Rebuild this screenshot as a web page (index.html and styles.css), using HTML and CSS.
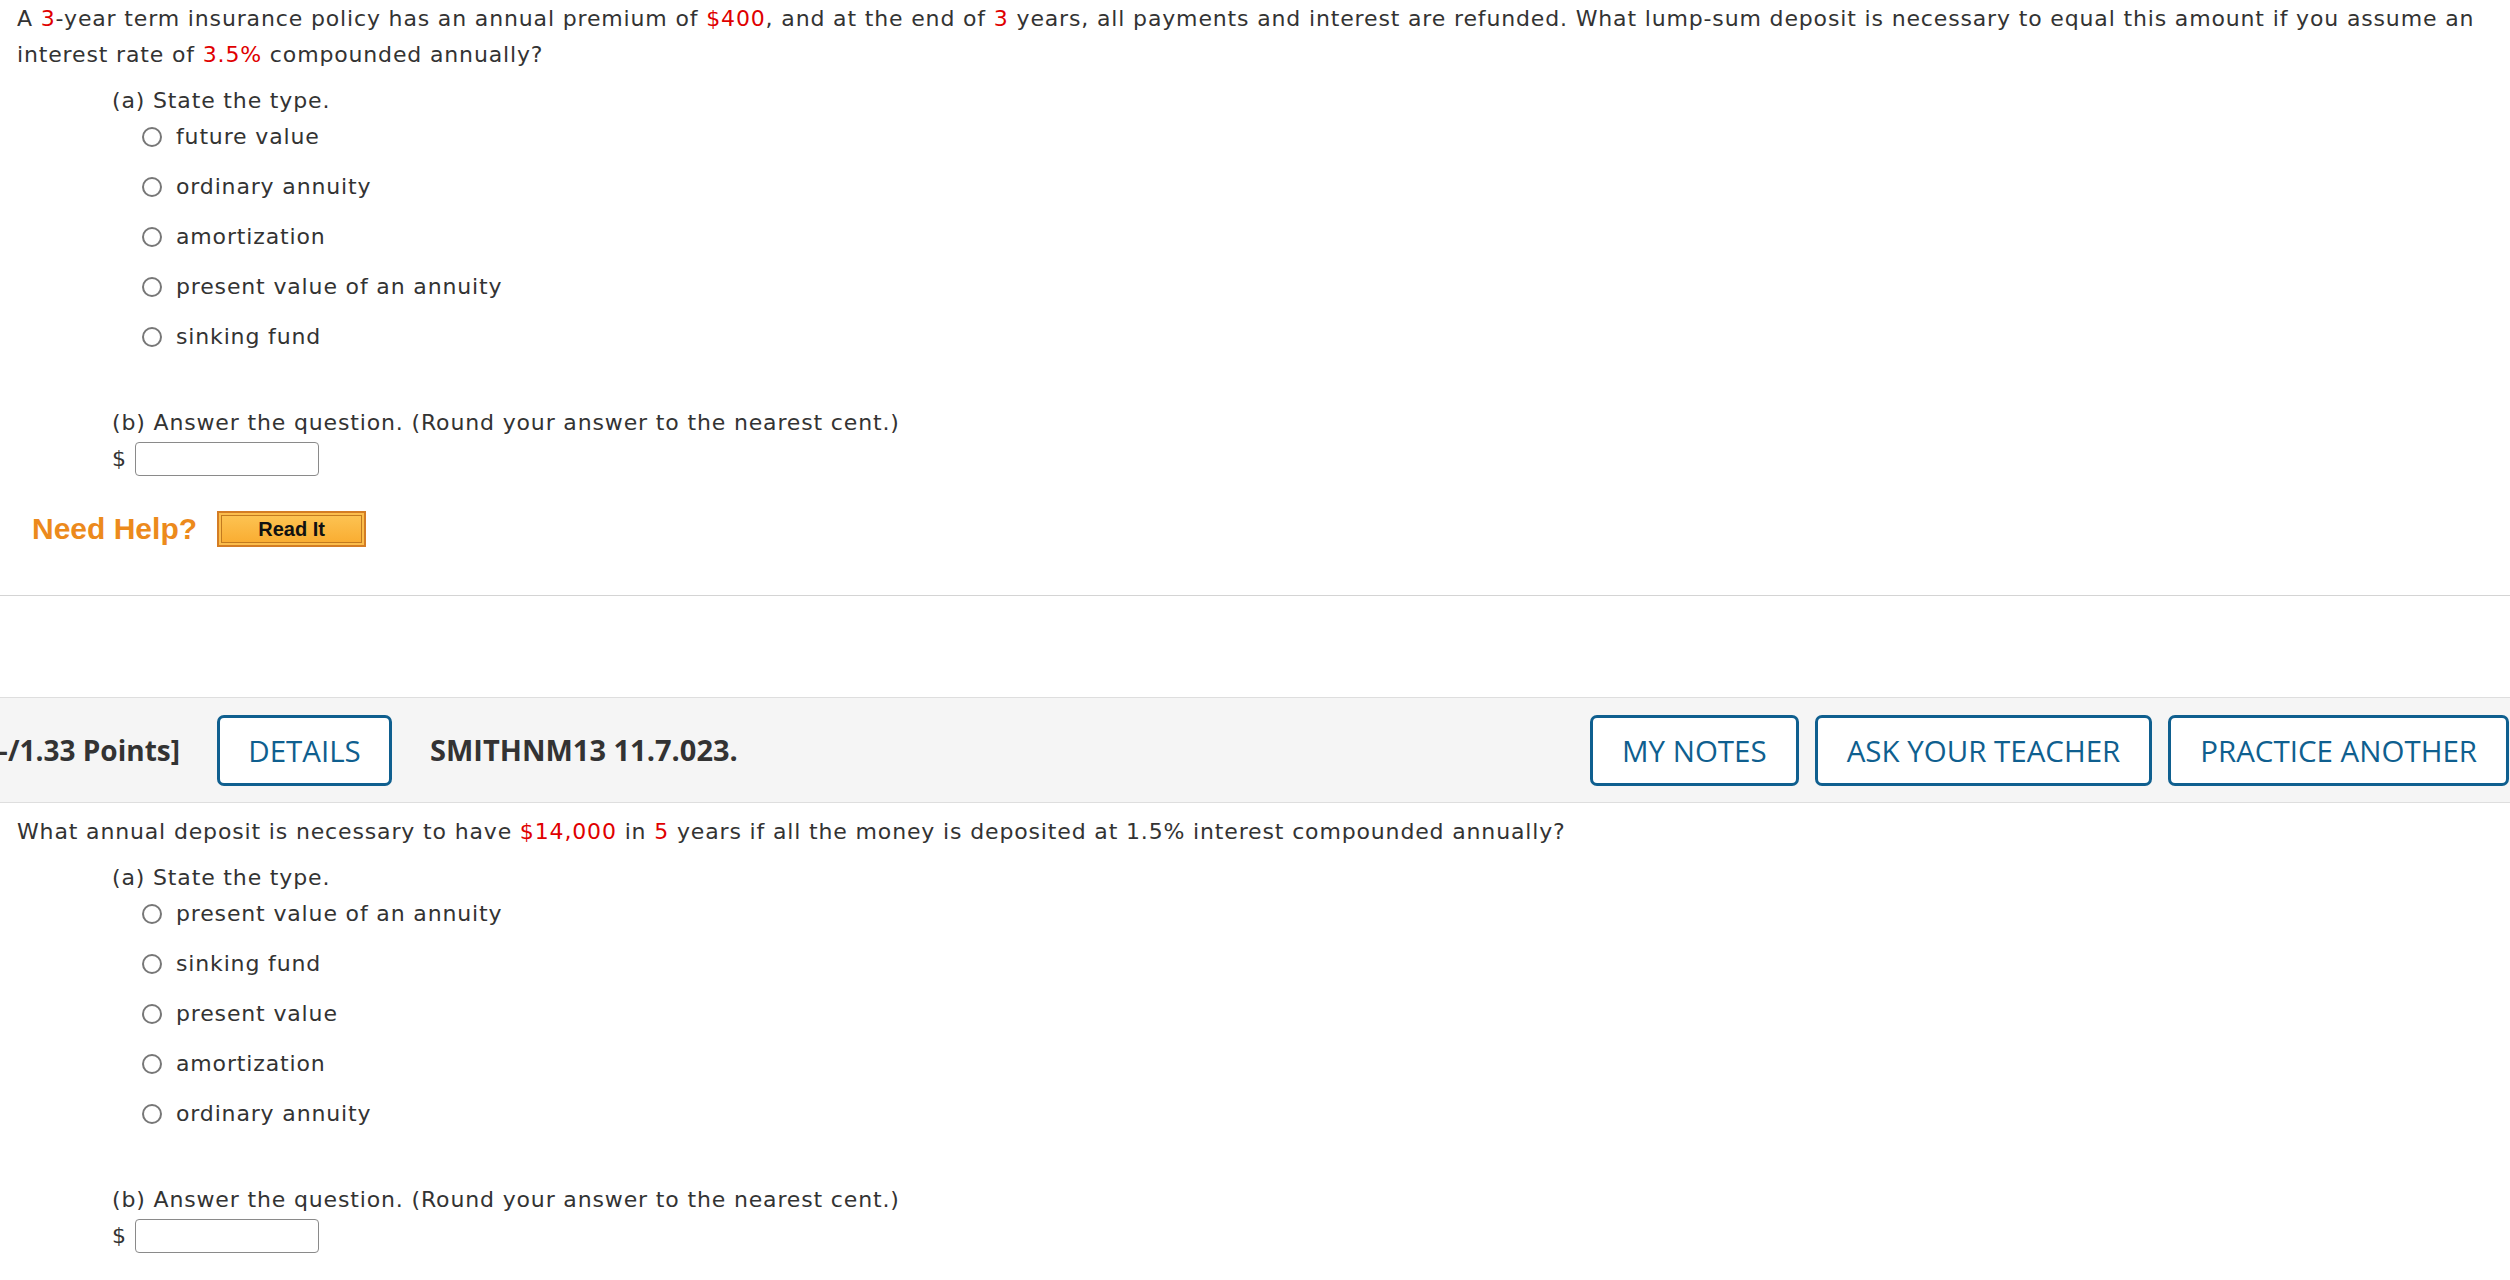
FILE: index.html
```html
<!DOCTYPE html>
<html lang="en">
<head>
<meta charset="utf-8">
<title>Question</title>
<link rel="stylesheet" href="styles.css">
</head>
<body>
<div class="question q1">
  <p class="stem">A <span class="red">3</span>-year term insurance policy has an annual premium of <span class="red">$400</span>, and at the end of <span class="red">3</span> years, all payments and interest are refunded. What lump-sum deposit is necessary to equal this amount if you assume an interest rate of <span class="red">3.5%</span> compounded annually?</p>
  <div class="part">
    <div class="part-label">(a) State the type.</div>
    <ul class="options">
      <li><span class="radio"></span>future value</li>
      <li><span class="radio"></span>ordinary annuity</li>
      <li><span class="radio"></span>amortization</li>
      <li><span class="radio"></span>present value of an annuity</li>
      <li><span class="radio"></span>sinking fund</li>
    </ul>
  </div>
  <div class="part part-b">
    <div class="part-label">(b) Answer the question. (Round your answer to the nearest cent.)</div>
    <div class="answer">$ <input class="answer-box" type="text"></div>
  </div>
  <div class="help">
    <span class="need-help">Need Help?</span>
    <button class="read-it">Read It</button>
  </div>
</div>
<hr class="separator">
<div class="qhead">
  <div class="points-wrap"><span class="points">[–/1.33 Points]</span></div>
  <button class="btn details">DETAILS</button>
  <span class="qid">SMITHNM13 11.7.023.</span>
  <div class="qhead-actions">
    <button class="btn">MY NOTES</button>
    <button class="btn">ASK YOUR TEACHER</button>
    <button class="btn">PRACTICE ANOTHER</button>
  </div>
</div>
<div class="question q2">
  <p class="stem">What annual deposit is necessary to have <span class="red">$14,000</span> in <span class="red">5</span> years if all the money is deposited at 1.5% interest compounded annually?</p>
  <div class="part">
    <div class="part-label">(a) State the type.</div>
    <ul class="options">
      <li><span class="radio"></span>present value of an annuity</li>
      <li><span class="radio"></span>sinking fund</li>
      <li><span class="radio"></span>present value</li>
      <li><span class="radio"></span>amortization</li>
      <li><span class="radio"></span>ordinary annuity</li>
    </ul>
  </div>
  <div class="part part-b">
    <div class="part-label">(b) Answer the question. (Round your answer to the nearest cent.)</div>
    <div class="answer">$ <input class="answer-box" type="text"></div>
  </div>
</div>
</body>
</html>
```

FILE: styles.css
```css
html, body {
  margin: 0;
  padding: 0;
  background: #fff;
}
body {
  font-family: "DejaVu Sans", Verdana, sans-serif;
  font-size: 22px;
  letter-spacing: 0.85px;
  line-height: 36px;
  color: #333;
  overflow: hidden;
}
.question {
  padding: 0 20px 0 17px;
}
.q1 {
  padding-top: 1px;
}
.stem {
  margin: 0;
}
.red {
  color: #e00000;
}
.part {
  margin-left: 95px;
  margin-top: 10px;
}
.part-b {
  margin-top: 50px;
}
.part-label {
  height: 36px;
}
.options {
  list-style: none;
  margin: 0;
  padding: 0 0 0 30px;
}
.options li {
  display: flex;
  align-items: center;
  height: 36px;
  margin-top: 14px;
}
.options li:first-child {
  margin-top: 0;
}
.radio {
  box-sizing: border-box;
  width: 20px;
  height: 20px;
  border: 2px solid #777;
  border-radius: 50%;
  margin-right: 14px;
  flex: none;
}
.answer {
  height: 36px;
  display: flex;
  align-items: center;
  white-space: pre;
}
.answer-box {
  box-sizing: border-box;
  width: 184px;
  height: 34px;
  border: 1px solid #8a8a8a;
  border-radius: 4px;
  margin: 0;
  padding: 0 4px;
  background: #fff;
}
.help {
  margin-top: 34px;
  margin-left: 15px;
  height: 36px;
  display: flex;
  align-items: center;
  gap: 20px;
  letter-spacing: 0;
}
.need-help {
  font-family: "Liberation Sans", Arial, sans-serif;
  font-weight: bold;
  font-size: 30px;
  color: #ec8a1c;
}
.read-it {
  box-sizing: border-box;
  width: 149px;
  height: 36px;
  margin: 0;
  padding: 0;
  border: 2px solid #d47d24;
  background: linear-gradient(#fdc555, #f9ab2f);
  box-shadow: inset 0 0 0 2px #fbbd4c, inset 0 0 0 3px #c27a1f;
  font-family: "Liberation Sans", Arial, sans-serif;
  font-weight: bold;
  font-size: 20px;
  color: #111;
}
.separator {
  margin: 48px 0 0 0;
  border: 0;
  border-top: 1px solid #d4d4d4;
  height: 0;
}
.qhead {
  margin-top: 101px;
  height: 104px;
  background: #f5f5f5;
  border-top: 1px solid #dedede;
  border-bottom: 1px solid #dedede;
  display: flex;
  align-items: center;
  padding-right: 1px;
  font-family: "Open Sans", sans-serif;
  font-size: 29px;
  letter-spacing: 0;
}
.points-wrap {
  width: 180px;
  flex: none;
  display: flex;
  justify-content: flex-end;
  white-space: nowrap;
}
.points {
  font-weight: bold;
  font-size: 28px;
  color: #333;
}
.btn {
  box-sizing: border-box;
  height: 71px;
  margin: 0;
  padding: 0 29px;
  border: 3px solid #0f5f8f;
  border-radius: 7px;
  background: #fff;
  font-family: "Open Sans", sans-serif;
  font-size: 29.5px;
  color: #0f5f8f;
  white-space: nowrap;
}
.details {
  margin-left: 37px;
  width: 175px;
  padding: 0;
}
.qid {
  margin-left: 38px;
  font-weight: bold;
  color: #333;
  white-space: nowrap;
}
.qhead-actions {
  margin-left: auto;
  display: flex;
  gap: 16px;
}
.q2 .stem {
  margin-top: 11px;
}
```
